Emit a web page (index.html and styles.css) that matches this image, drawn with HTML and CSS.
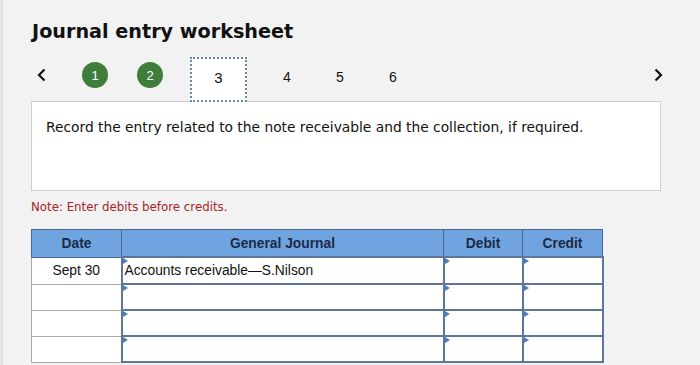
FILE: index.html
```html
<!DOCTYPE html>
<html>
<head>
<meta charset="utf-8">
<link rel="stylesheet" href="styles.css">
</head>
<body>
<div class="page">
  <h1 class="title">Journal entry worksheet</h1>
  <div class="nav">
    <span class="arrow arrow-prev"><svg width="9" height="14" viewBox="0 0 9 14"><path d="M7.5 1.5 L2 7 L7.5 12.5" fill="none" stroke="#111" stroke-width="2.2"/></svg></span>
    <span class="step done first">1</span>
    <span class="step done">2</span>
    <span class="step current">3</span>
    <span class="step">4</span>
    <span class="step">5</span>
    <span class="step">6</span>
    <span class="arrow arrow-next"><svg width="9" height="14" viewBox="0 0 9 14"><path d="M1.5 1.5 L7 7 L1.5 12.5" fill="none" stroke="#111" stroke-width="2.2"/></svg></span>
  </div>
  <div class="prompt">Record the entry related to the note receivable and the collection, if required.</div>
  <p class="note">Note: Enter debits before credits.</p>
  <table class="journal">
    <colgroup>
      <col class="c-date"><col class="c-acct"><col class="c-debit"><col class="c-credit">
    </colgroup>
    <thead>
      <tr><th>Date</th><th>General Journal</th><th>Debit</th><th>Credit</th></tr>
    </thead>
    <tbody>
      <tr class="first-row"><td class="date">Sept 30</td><td class="in acct">Accounts receivable—S.Nilson</td><td class="in"></td><td class="in"></td></tr>
      <tr><td class="date"></td><td class="in acct"></td><td class="in"></td><td class="in"></td></tr>
      <tr><td class="date"></td><td class="in acct"></td><td class="in"></td><td class="in"></td></tr>
      <tr><td class="date"></td><td class="in acct"></td><td class="in"></td><td class="in"></td></tr>
    </tbody>
  </table>
</div>
</body>
</html>
```
FILE: styles.css
```css
html, body {
  margin: 0;
  padding: 0;
  background: #f2f2f2;
}
body {
  height: 365px;
  overflow: hidden;
  border-left: 2px solid #e6e6e6;
  box-sizing: border-box;
}
.page {
  padding: 20px 0 0 28px;
  border-left: 1px solid #dadada;
  min-height: 365px;
  box-sizing: border-box;
}
.title {
  margin: 0;
  font-family: "DejaVu Sans", Verdana, sans-serif;
  font-weight: bold;
  font-size: 19.2px;
  line-height: 24px;
  color: #111;
  padding-left: 1px;
}
.nav {
  display: flex;
  align-items: center;
  height: 44px;
  margin-top: 13px;
  width: 630px;
  gap: 27px;
  font-family: "Liberation Sans", Arial, sans-serif;
}
.arrow {
  display: flex;
  align-items: center;
  margin-bottom: 8px;
}
.arrow-prev {
  margin-left: 6px;
  margin-right: 9px;
}
.arrow-next {
  margin-left: auto;
  margin-right: -2px;
}
.step {
  width: 26px;
  height: 26px;
  display: flex;
  align-items: center;
  justify-content: center;
  font-size: 14px;
  color: #111;
  margin-bottom: 4px;
}
.step.first { margin-right: 2px; }
.step.done {
  border-radius: 50%;
  background: #3f7d3b;
  color: #fff;
  font-size: 13px;
  margin-bottom: 8px;
}
.step.current {
  margin-top: 1px;
  margin-bottom: 0;
  background: #fff;
  border: 2px dotted #6a86ad;
  font-size: 15px;
  padding-bottom: 4px;
  box-sizing: border-box;
  width: 57px;
  height: 45px;
}
.prompt {
  width: 628px;
  height: 88px;
  background: #fff;
  border: 1px solid #cfcfcf;
  font-family: "DejaVu Sans", Verdana, sans-serif;
  font-size: 13.8px;
  color: #111;
  line-height: 50px;
  text-indent: 14px;
  white-space: nowrap;
}
.note {
  margin: 9px 0 0;
  font-family: "DejaVu Sans", Verdana, sans-serif;
  font-size: 11.8px;
  line-height: 14px;
  color: #a8232c;
}
.journal {
  margin-top: 15px;
  border-collapse: collapse;
  table-layout: fixed;
  width: 571px;
  font-family: "Liberation Sans", Arial, sans-serif;
  font-size: 13.8px;
}
.c-date { width: 90px; }
.c-acct { width: 322px; }
.c-debit { width: 79px; }
.c-credit { width: 80px; }
.journal th {
  height: 26px;
  padding: 0;
  background: #70a4e0;
  border: 1px solid #4b6690;
  color: #1b2b47;
  font-weight: bold;
  font-size: 13.8px;
}
.journal td {
  height: 24px;
  padding: 0;
  background: #fff;
}
.journal tr.first-row td {
  height: 25px;
}
.journal td.date {
  border: 1px solid #a9a9a9;
  text-align: center;
  color: #111;
}
.journal td.in {
  position: relative;
  border: 2px solid #5e7699;
}
.journal td.in::before {
  content: "";
  position: absolute;
  left: 0;
  top: 0;
  border-top: 3px solid transparent;
  border-bottom: 3px solid transparent;
  border-left: 5px solid #4d7cc0;
}
.journal td.acct {
  padding-left: 2px;
  color: #111;
}
```
